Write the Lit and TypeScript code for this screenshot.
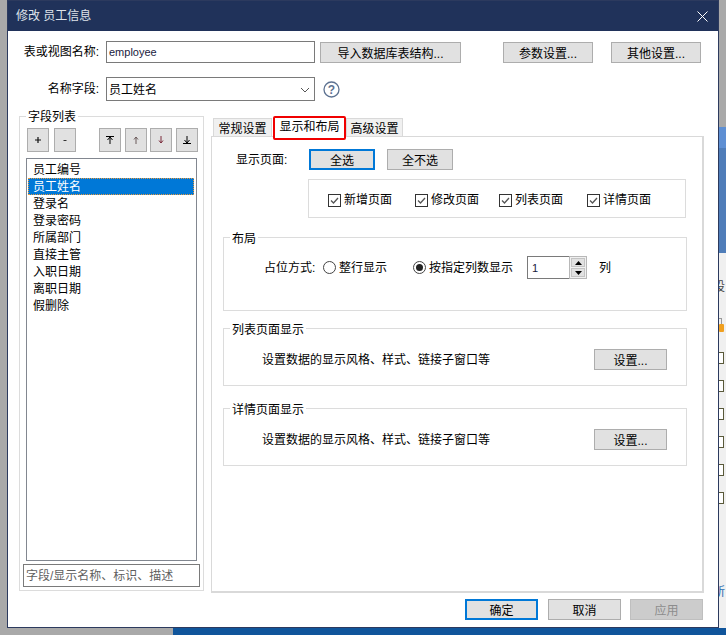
import { LitElement, html, css, svg } from "lit";
import { customElement } from "lit/decorators.js";

const fields = ["员工编号", "员工姓名", "登录名", "登录密码", "所属部门", "直接主管", "入职日期", "离职日期", "假删除"];
const fileRows = [352, 380, 408, 436, 464, 492];

@customElement("app-root")
export class AppRoot extends LitElement {
  static styles = css`
    :host {
      display: block;
      width: 726px;
      height: 635px;
      overflow: hidden;
      position: relative;
      background: #a9a9a9;
      font-family: "Liberation Sans", "Noto Sans CJK SC", sans-serif;
      font-size: 12px;
      line-height: 16px;
      color: #000;
    }
    .strip {
      position: absolute;
      left: 719px;
      right: 0;
      top: 127px;
      height: 501px;
      overflow: hidden;
      background: #f0f0f0;
    }
    .band1 { height: 21px; background: #5e8fd3; }
    .band2 { height: 105px; background: #4f7db9; }
    .frag { position: absolute; left: -6px; white-space: nowrap; }
    .frag.she { top: 152px; color: #444; }
    .frag.suo { top: 457px; color: #2a6cb0; }
    .lock { position: absolute; left: 0; top: 197px; width: 5px; height: 8px; background: #f0a020; border-radius: 1px; }
    .shackle { position: absolute; left: 0; top: 191px; width: 2px; height: 6px; border: 1px solid #999; border-left: 0; border-bottom: 0; }
    .file {
      position: absolute;
      left: 0;
      width: 4px;
      height: 10px;
      border: 1px solid #5a5a3a;
      border-left: 0;
      background: #fff;
    }
    .foot {
      position: absolute;
      left: 173px;
      right: 0;
      bottom: 0;
      height: 7px;
      background: #10559b;
    }
    .dialog {
      position: absolute;
      left: 7px;
      top: 0;
      width: 712px;
      height: 628px;
      box-sizing: border-box;
      border: 1px solid #2c3a5e;
      background: #fff;
      display: flex;
      flex-direction: column;
    }
    .title {
      height: 30px;
      background: #20325a;
      color: #dfe3ea;
      display: flex;
      align-items: center;
      justify-content: space-between;
      padding: 0 10px 0 8px;
      flex: none;
    }
    .close { width: 11px; height: 11px; display: block; }
    .body {
      flex: 1;
      display: flex;
      flex-direction: column;
      padding: 10px 0 0 0;
      min-height: 0;
    }
    .row1, .row2 { display: flex; flex: none; }
    .row1 { height: 22px; align-items: flex-start; }
    .row2 { height: 24px; margin-top: 14px; align-items: center; }
    .label { width: 91px; text-align: right; margin-right: 7px; line-height: 22px; white-space: nowrap; flex: none; }
    .input {
      width: 209px;
      box-sizing: border-box;
      border: 1px solid #7a7a7a;
      height: 22px;
      display: flex;
      align-items: center;
      padding-left: 2px;
      font-size: 11px;
      color: #1a1a40;
      flex: none;
    }
    .select {
      height: 24px;
      justify-content: space-between;
      padding: 2px 4px 0 2px;
      color: #000;
      font-size: 12px;
    }
    .btn {
      box-sizing: border-box;
      background: #e1e1e1;
      border: 1px solid #adadad;
      display: flex;
      align-items: center;
      justify-content: center;
      height: 21px;
      padding-top: 2px;
      flex: none;
      white-space: nowrap;
    }
    .btn.def { border: 2px solid #0078d7; padding-top: 2px; }
    .btn.off { background: #cccccc; border-color: #bfbfbf; color: #8c8c8c; }
    .row1 .btn { margin-top: 1px; }
    .import { width: 141px; margin-left: 5px; }
    .param { width: 90px; margin-left: 42px; }
    .other { width: 90px; margin-left: 18px; }
    .help { margin-left: 8px; width: 17px; height: 17px; display: block; }
    .main { display: flex; margin-top: 15px; margin-left: 11px; height: 477px; flex: none; }
    .group, .flist {
      position: relative;
      box-sizing: border-box;
      border: 1px solid #dcdcdc;
    }
    .legend {
      position: absolute;
      top: -7px;
      left: 6px;
      padding: 0 2px;
      background: #fff;
      white-space: nowrap;
    }
    .flist {
      width: 185px;
      height: 475px;
      display: flex;
      flex-direction: column;
      flex: none;
    }
    .flist .legend { top: -8px; }
    .tools { display: flex; margin: 11px 0 0 7px; flex: none; }
    .tools .btn { width: 22px; height: 24px; padding: 0; }
    .tools .btn:nth-child(2) { margin-left: 5px; }
    .tools .btn:nth-child(3) { margin-left: 23px; }
    .tools .btn:nth-child(4) { margin-left: 4px; }
    .tools .btn:nth-child(5) { margin-left: 3px; }
    .tools .btn:nth-child(6) { margin-left: 4px; }
    .list {
      box-sizing: border-box;
      margin: 6px 0 0 6px;
      width: 171px;
      height: 403px;
      border: 1px solid #828790;
      padding: 2px 2px 0 1px;
      flex: none;
    }
    .item { height: 17px; line-height: 19px; padding-left: 5px; }
    .item.sel {
      background: #0078d7;
      color: #fff;
      outline: 1px dotted #e69a3f;
      outline-offset: -1px;
    }
    .search {
      box-sizing: border-box;
      height: 23px;
      width: 177px;
      margin: 3px 0 0 3px;
      border: 1px solid #7a7a7a;
      display: flex;
      align-items: center;
      padding-left: 2px;
      color: #5f5f5f;
      flex: none;
    }
    .right { margin-left: 7px; width: 493px; display: flex; flex-direction: column; flex: none; }
    .tabs { display: flex; height: 20px; align-items: flex-start; position: relative; z-index: 1; padding-left: 2px; flex: none; }
    .tab {
      box-sizing: border-box;
      height: 18px;
      margin-top: 2px;
      padding-top: 2px;
      background: #f0f0f0;
      border: 1px solid #d9d9d9;
      border-bottom: 0;
      display: flex;
      align-items: center;
      justify-content: center;
      flex: none;
    }
    .tab.t1 { width: 59px; }
    .tab.t3 { width: 57px; }
    .tab.active {
      width: 73px;
      height: 24px;
      margin: 0 0 0 1px;
      padding: 2px 0 4px;
      background: #fff;
      border: 2px solid #f00000;
      border-radius: 2px;
    }
    .panel {
      box-sizing: border-box;
      height: 457px;
      border: 1px solid #d9d9d9;
      border-width: 1px 2px 2px 1px;
      padding: 12px 0 0 11px;
      flex: none;
    }
    .pages { display: flex; align-items: center; height: 21px; margin-left: 13px; }
    .cap { width: 73px; white-space: nowrap; flex: none; }
    .pages .btn { width: 66px; }
    .pages .btn + .btn { margin-left: 12px; }
    .checks {
      box-sizing: border-box;
      margin: 9px 0 0 85px;
      width: 378px;
      height: 39px;
      border: 1px solid #dcdcdc;
      display: flex;
      align-items: center;
      padding: 3px 0 0 19px;
    }
    .chk { display: flex; align-items: center; gap: 3px; white-space: nowrap; flex: none; }
    .chk svg { width: 13px; height: 13px; display: block; }
    .chk:nth-child(1) { width: 87px; }
    .chk:nth-child(2) { width: 84px; }
    .chk:nth-child(3) { width: 88px; }
    .group { width: 464px; }
    .g1 { height: 74px; margin-top: 19px; }
    .g2 { height: 58px; margin-top: 17px; }
    .g3 { height: 58px; margin-top: 22px; }
    .layout { display: flex; align-items: center; margin-top: 18px; height: 23px; padding-left: 40px; }
    .place { width: 59px; white-space: nowrap; flex: none; }
    .radio { display: flex; align-items: center; gap: 3px; white-space: nowrap; flex: none; }
    .radio svg { width: 13px; height: 13px; display: block; }
    .r1 { width: 90px; }
    .r2 { width: 114px; }
    .spin { display: flex; width: 60px; height: 23px; flex: none; }
    .spin-val {
      box-sizing: border-box;
      flex: 1;
      border: 1px solid #7a7a7a;
      border-right: 0;
      padding-left: 4px;
      display: flex;
      align-items: center;
      color: #1a1a40;
      font-size: 11px;
    }
    .arrows {
      box-sizing: border-box;
      width: 18px;
      border: 1px solid #b8b8b8;
      padding: 1px;
      display: flex;
      flex-direction: column;
      gap: 1px;
      background: #f0f0f0;
    }
    .arrows span { flex: 1; background: #e1e1e1; border: 1px solid #c4c4c4; display: flex; align-items: center; justify-content: center; }
    .arrows svg { width: 7px; height: 4px; display: block; }
    .unit { margin-left: 12px; }
    .setrow { display: flex; align-items: center; justify-content: space-between; margin-top: 20px; padding: 0 19px 0 38px; }
    .setrow .btn { width: 73px; }
    .actions { display: flex; padding-left: 457px; margin-top: 6px; flex: none; }
    .actions .btn { width: 73px; }
    .actions .btn:nth-child(2) { margin-left: 10px; }
    .actions .btn:nth-child(3) { margin-left: 9px; }
    .tool { width: 12px; height: 12px; display: block; }
  `;

  private tool(d: string, c = "#000", w = "1") {
    return html`<svg class="tool" viewBox="0 0 12 12" fill="none" stroke=${c} stroke-width=${w}>${svg`<path d=${d}></path>`}</svg>`;
  }
  private chk() {
    return html`<svg viewBox="0 0 13 13"><rect x=".5" y=".5" width="12" height="12" fill="#fff" stroke="#333"></rect><path d="M3 6.5l2.5 2.5 4.5-5" fill="none" stroke="#555" stroke-width="1.3"></path></svg>`;
  }
  private radio(on: boolean) {
    return html`<svg viewBox="0 0 13 13"><circle cx="6.5" cy="6.5" r="6" fill="#fff" stroke="#444"></circle>${on ? svg`<circle cx="6.5" cy="6.5" r="3.5" fill="#222"></circle>` : null}</svg>`;
  }

  render() {
    return html`
      <div class="strip">
        <div class="band1"></div>
        <div class="band2"></div>
        <span class="frag she">设</span>
        <div class="shackle"></div>
        <div class="lock"></div>
        ${fileRows.map((y) => html`<div class="file" style="top:${y - 127}px"></div>`)}
        <span class="frag suo">所</span>
      </div>
      <div class="foot"></div>
      <div class="dialog">
        <div class="title">
          <span>修改 员工信息</span>
          <svg class="close" viewBox="0 0 11 11" stroke="#fff" stroke-width="1"><path d="M.5.5l10 10M10.5.5l-10 10"></path></svg>
        </div>
        <div class="body">
          <div class="row1">
            <span class="label">表或视图名称:</span>
            <div class="input">employee</div>
            <div class="btn import">导入数据库表结构...</div>
            <div class="btn param">参数设置...</div>
            <div class="btn other">其他设置...</div>
          </div>
          <div class="row2">
            <span class="label">名称字段:</span>
            <div class="input select">员工姓名
              <svg width="10" height="6" viewBox="0 0 10 6" fill="none" stroke="#555"><path d="M1 1l4 4 4-4"></path></svg>
            </div>
            <svg class="help" viewBox="0 0 17 17">
              <circle cx="8.5" cy="8.5" r="7.5" fill="#fff" stroke="#5d7291" stroke-width="1.3"></circle>
              <text x="8.5" y="13" text-anchor="middle" font-size="12" font-weight="700" fill="#5d7291" font-family="Liberation Sans">?</text>
            </svg>
          </div>
          <div class="main">
            <div class="flist">
              <span class="legend">字段列表</span>
              <div class="tools">
                <div class="btn">${this.tool("M6 3v6M3 6h6", "#111", "1.2")}</div>
                <div class="btn">${this.tool("M4.5 6.5h3", "#333")}</div>
                <div class="btn">${this.tool("M2 2.5h8M6 3v7M3.5 6L6 3l2.5 3")}</div>
                <div class="btn">${this.tool("M6 3v7M4 5.5L6 3l2 2.5", "#6b5a5a")}</div>
                <div class="btn">${this.tool("M6 2v7M4 6.5L6 9l2-2.5", "#7a2a3a")}</div>
                <div class="btn">${this.tool("M2 9.5h8M6 2v7M3.5 6L6 9l2.5-3")}</div>
              </div>
              <div class="list">
                ${fields.map((f, i) => html`<div class="item ${i === 1 ? "sel" : ""}">${f}</div>`)}
              </div>
              <div class="search">字段/显示名称、标识、描述</div>
            </div>
            <div class="right">
              <div class="tabs">
                <div class="tab t1">常规设置</div>
                <div class="tab active">显示和布局</div>
                <div class="tab t3">高级设置</div>
              </div>
              <div class="panel">
                <div class="pages">
                  <span class="cap">显示页面:</span>
                  <div class="btn def">全选</div>
                  <div class="btn">全不选</div>
                </div>
                <div class="checks">
                  <span class="chk">${this.chk()}新增页面</span>
                  <span class="chk">${this.chk()}修改页面</span>
                  <span class="chk">${this.chk()}列表页面</span>
                  <span class="chk">${this.chk()}详情页面</span>
                </div>
                <div class="group g1">
                  <span class="legend">布局</span>
                  <div class="layout">
                    <span class="place">占位方式:</span>
                    <span class="radio r1">${this.radio(false)}整行显示</span>
                    <span class="radio r2">${this.radio(true)}按指定列数显示</span>
                    <div class="spin">
                      <div class="spin-val">1</div>
                      <div class="arrows">
                        <span><svg viewBox="0 0 7 4"><path d="M3.5 0L7 4H0z"></path></svg></span>
                        <span><svg viewBox="0 0 7 4"><path d="M0 0h7L3.5 4z"></path></svg></span>
                      </div>
                    </div>
                    <span class="unit">列</span>
                  </div>
                </div>
                <div class="group g2">
                  <span class="legend">列表页面显示</span>
                  <div class="setrow"><span>设置数据的显示风格、样式、链接子窗口等</span><div class="btn">设置...</div></div>
                </div>
                <div class="group g3">
                  <span class="legend">详情页面显示</span>
                  <div class="setrow"><span>设置数据的显示风格、样式、链接子窗口等</span><div class="btn">设置...</div></div>
                </div>
              </div>
            </div>
          </div>
          <div class="actions">
            <div class="btn def">确定</div>
            <div class="btn">取消</div>
            <div class="btn off">应用</div>
          </div>
        </div>
      </div>
    `;
  }
}
